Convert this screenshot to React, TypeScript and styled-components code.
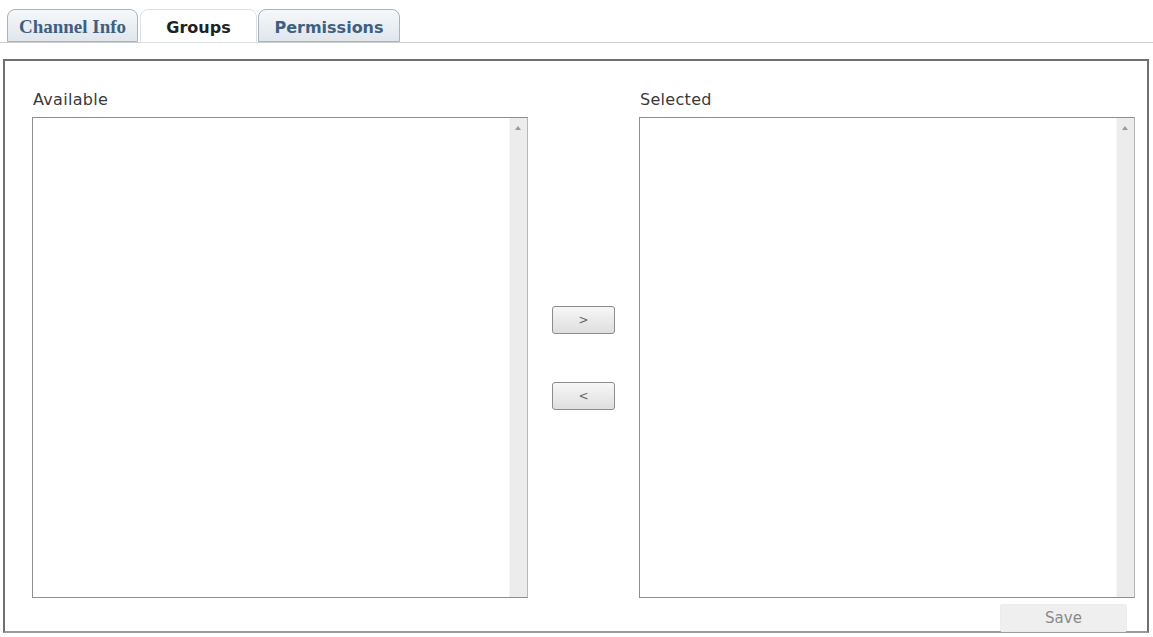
import styled, { createGlobalStyle } from "styled-components";
import React from "react";

export default function App() {
  return (
    <>
      <GlobalStyle />
      <TabBar>
        <Tab $serif $width={131}>
          Channel Info
        </Tab>
        <Tab $active $width={117}>
          Groups
        </Tab>
        <Tab $width={142}>Permissions</Tab>
      </TabBar>
      <Panel>
        <Columns>
          <Column>
            <Label>Available</Label>
            <ListBox />
          </Column>
          <Mover>
            <MoveButton>&gt;</MoveButton>
            <MoveButton>&lt;</MoveButton>
          </Mover>
          <Column>
            <Label>Selected</Label>
            <ListBox />
          </Column>
        </Columns>
        <Footer>
          <SaveButton>Save</SaveButton>
        </Footer>
      </Panel>
    </>
  );
}

const GlobalStyle = createGlobalStyle`
  body {
    margin: 0;
    background: #fff;
    font-family: "DejaVu Sans", Verdana, sans-serif;
    overflow: hidden;
  }
`;

const TabBar = styled.div`
  display: flex;
  align-items: flex-end;
  gap: 1px;
  height: 33px;
  padding: 9px 0 0 7px;
  border-bottom: 1px solid #cfcfcf;
`;

const Tab = styled.div<{ $active?: boolean; $serif?: boolean; $width: number }>`
  box-sizing: border-box;
  width: ${(p) => p.$width}px;
  margin-left: ${(p) => (p.$active ? "1px" : "0")};
  height: ${(p) => (p.$active ? "34px" : "33px")};
  margin-bottom: ${(p) => (p.$active ? "-1px" : "0")};
  display: flex;
  align-items: center;
  justify-content: center;
  padding-top: 3px;
  border: 1px solid #a9b3bd;
  border-bottom: ${(p) => (p.$active ? "1px solid #fff" : "1px solid #a9b3bd")};
  border-radius: 8px 8px 0 0;
  background: ${(p) =>
    p.$active ? "#fff" : "linear-gradient(#f6f8fa, #dfe6ec)"};
  border-color: ${(p) => (p.$active ? "#dde1e5" : "#a9b3bd")};
  font-family: ${(p) =>
    p.$serif
      ? `"Liberation Serif", "Times New Roman", serif`
      : `"DejaVu Sans", Verdana, sans-serif`};
  font-weight: bold;
  font-size: ${(p) => (p.$serif ? "19px" : "16px")};
  color: ${(p) => (p.$active ? "#222" : "#3f5f80")};
`;

const Panel = styled.div`
  margin: 16px 4px 0 3px;
  height: 574px;
  border: 2px solid #707070;
  border-bottom-color: #9a9a9a;
  padding: 29px 12px 0 27px;
  box-sizing: border-box;
`;

const Columns = styled.div`
  display: grid;
  grid-template-columns: 496px 111px 496px;
`;

const Column = styled.div`
  display: flex;
  flex-direction: column;
`;

const Label = styled.div`
  height: 27px;
  font-size: 16px;
  letter-spacing: 0.3px;
  color: #3a3a3a;
  padding-left: 1px;
`;

const ListBox = styled.div`
  position: relative;
  height: 481px;
  box-sizing: border-box;
  border: 1px solid #8e8e8e;
  border-right-color: #b5b5b5;
  background: #fff;

  &::before {
    content: "";
    position: absolute;
    top: 0;
    right: 0;
    bottom: 0;
    width: 17px;
    background: #ececec;
    border-left: 1px solid #f6f6f6;
  }

  &::after {
    content: "";
    position: absolute;
    right: 6px;
    top: 8px;
    width: 0;
    height: 0;
    border-left: 3px solid transparent;
    border-right: 3px solid transparent;
    border-bottom: 4px solid #9a9a9a;
  }
`;

const Mover = styled.div`
  display: flex;
  flex-direction: column;
  align-items: center;
  justify-content: center;
  gap: 48px;
  padding-top: 27px;
`;

const MoveButton = styled.button`
  width: 63px;
  height: 28px;
  border: 1px solid #8c8c8c;
  border-radius: 3px;
  background: linear-gradient(#f7f7f7, #dedede);
  font-family: "DejaVu Sans", Verdana, sans-serif;
  font-size: 12px;
  color: #666;
  padding: 0;
`;

const Footer = styled.div`
  display: flex;
  justify-content: flex-end;
  padding: 6px 8px 0 0;
`;

const SaveButton = styled.button`
  width: 127px;
  height: 28px;
  border: 1px solid #ececec;
  border-radius: 2px;
  background: #efefef;
  font-family: "DejaVu Sans", Verdana, sans-serif;
  font-size: 15px;
  color: #8a8a8a;
`;
